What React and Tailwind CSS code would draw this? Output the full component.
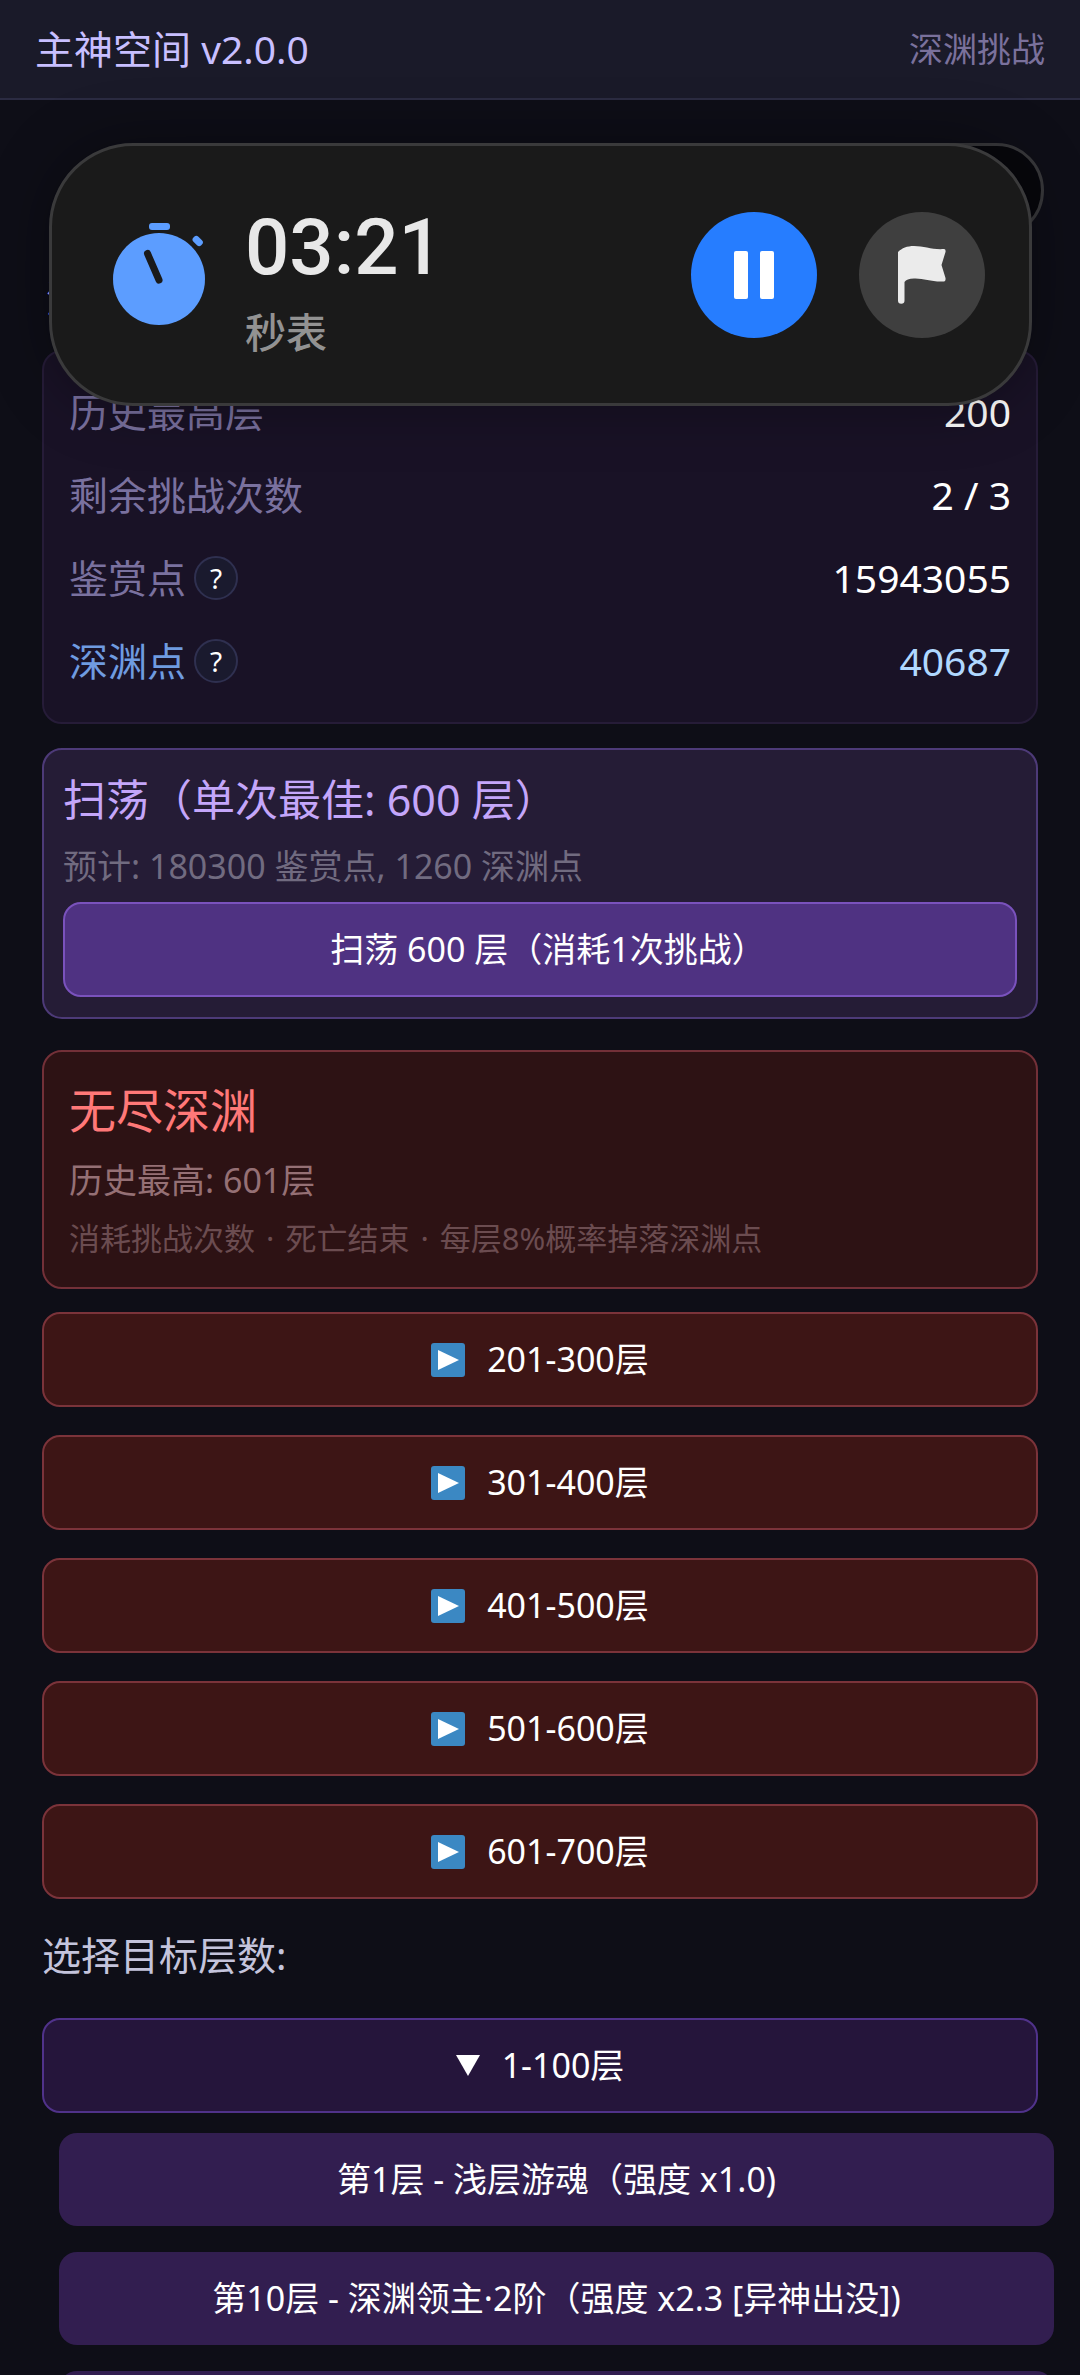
import React, { useState } from "react";

const stats = [
  { label: "历史最高层", value: "200" },
  { label: "剩余挑战次数", value: "2 / 3" },
  { label: "鉴赏点", value: "15943055", help: true },
  { label: "深渊点", value: "40687", help: true, highlight: true },
];

const endlessRanges = ["201-300层", "301-400层", "401-500层", "501-600层", "601-700层"];

const floors = [
  "第1层 - 浅层游魂（强度 x1.0)",
  "第10层 - 深渊领主·2阶（强度 x2.3 [异神出没])",
];

const Header = () => (
  <header className="flex items-center justify-between h-[100px] px-[35px] bg-[#1a1a29] border-b-2 border-[#2b2b42]">
    <h1 className="text-[39px] leading-[56px] text-[#c8bfff]">主神空间 v2.0.0</h1>
    <span className="text-[34px] leading-[56px] text-[#7a719c]">深渊挑战</span>
  </header>
);

const StopwatchIcon = () => (
  <svg className="w-[92px] h-[104px]" viewBox="0 0 92 104">
    <rect x="36" y="0" width="21" height="7" rx="3" fill="#5c9dff" />
    <rect x="79" y="14" width="11" height="7" rx="3" fill="#5c9dff" transform="rotate(45 84 18)" />
    <circle cx="46" cy="56" r="46" fill="#5c9dff" />
    <path d="M34.500 30.500L46 57" stroke="#1a1a1a" strokeWidth="7" strokeLinecap="round" />
  </svg>
);

const StopwatchPopup = ({ running, onToggle }) => (
  <>
    <div className="absolute top-[143px] right-9 w-[300px] h-[95px] rounded-full bg-[#07070c] border-3 border-[#38383b]" />
    <div className="absolute top-[143px] left-[49px] right-12 flex items-center h-[263px] pl-[61px] pr-11 rounded-[84px] bg-[#1a1a1a] border-3 border-[#3a3a3b] shadow-[0_0_60px_rgba(0,0,0,0.35)]">
      <StopwatchIcon />
      <div className="flex-1 pl-10 pt-[30px]">
        <div className="font-['Roboto'] font-medium text-[78px] leading-[84px] text-[#e8e8e8]">03:21</div>
        <div className="text-[41px] leading-[84px] font-medium text-[#929292]">秒表</div>
      </div>
      <div className="flex gap-[42px]">
        <button
          aria-label="暂停"
          aria-pressed={!running}
          onClick={onToggle}
          className="flex items-center justify-center size-[126px] rounded-full bg-[#267dff]"
        >
          <svg className="w-10 h-12" viewBox="0 0 40 48" fill="#ffffff">
            <rect x="0" y="0" width="14" height="48" rx="2" />
            <rect x="26" y="0" width="14" height="48" rx="2" />
          </svg>
        </button>
        <button aria-label="计次" className="flex items-center justify-center size-[126px] rounded-full bg-[#3f3f3f]">
          <svg className="w-12 h-[58px]" viewBox="0 0 48 58" fill="#ebebeb">
            <path d="M0 6C4 2 9 0 16 0C26 0 35 4 46 3Q48 3 47.500 6L43.500 19L47.500 32Q48 35.500 45 35.500C33 36 25 32 16 32.500C11 32.500 8 34 6.500 36V54.500A3.200 3.200 0 0 1 0 54.500Z" />
          </svg>
        </button>
      </div>
    </div>
  </>
);

const StatRow = ({ label, value, help, highlight }) => (
  <div className="flex items-center justify-between h-[83px]">
    <div className="flex items-center gap-2">
      <span className={highlight ? "text-[39px] leading-[56px] text-[#6f9be0]" : "text-[39px] leading-[56px] text-[#7a719f]"}>
        {label}
      </span>
      {help && (
        <button
          aria-label={`${label}说明`}
          className="flex items-center justify-center size-11 rounded-full bg-[#1a1a2e] border-2 border-[#2f3050] text-[28px] leading-none text-white"
        >
          ?
        </button>
      )}
    </div>
    <span className={highlight ? "text-[39px] leading-[56px] text-[#b0d8ff]" : "text-[39px] leading-[56px] text-white"}>
      {value}
    </span>
  </div>
);

const PlayIcon = () => (
  <svg className="size-[34px]" viewBox="0 0 34 34">
    <rect width="34" height="34" rx="3" fill="#3b88c3" />
    <path d="M7 7L28 17L7 27Z" fill="#ffffff" />
  </svg>
);

const Dot = () => <span className="mx-[3px]">·</span>;

const App = () => {
  const [running, setRunning] = useState(true);
  const [open, setOpen] = useState(true);

  return (
    <div className="relative h-screen overflow-hidden bg-[#0e0e17] font-['Noto_Sans','Noto_Sans_CJK_SC',sans-serif]">
      <Header />

      <main className="px-[42px] pt-[152px]">
        <h2 className="h-[98px] pl-1 text-[39px] leading-[92px] text-[#c4a6ff]">深渊挑战</h2>

        <section className="pt-[18px] pb-5 px-[25px] rounded-[20px] bg-[#191226] border-2 border-[#261c38]">
          {stats.map((s) => (
            <StatRow key={s.label} {...s} />
          ))}
        </section>

        <section className="mt-6 py-5 px-[19px] rounded-[20px] bg-[#251c36] border-2 border-[#4d3a78]">
          <h3 className="text-[43px] leading-[60px] text-[#c4a6fa]">扫荡（单次最佳: 600 层）</h3>
          <p className="mt-2 text-[34px] leading-[56px] text-[#716b80]">预计: 180300 鉴赏点, 1260 深渊点</p>
          <button className="block w-full h-[95px] mt-2 pl-4 rounded-[18px] bg-[#4f3282] border-2 border-[#7a52bd] text-[34px] text-white">
            扫荡 600 层（消耗1次挑战）
          </button>
        </section>

        <section className="mt-[31px] pt-[26px] pb-[21px] px-[25px] rounded-[20px] bg-[#2d1214] border-2 border-[#733038]">
          <h3 className="text-[47px] leading-[64px] text-[#ff7878]">无尽深渊</h3>
          <p className="mt-[10px] text-[34px] leading-[56px] text-[#957075]">历史最高: 601层</p>
          <p className="mt-[2px] text-[31px] leading-[56px] text-[#6b4c50]">
            消耗挑战次数 <Dot /> 死亡结束 <Dot /> 每层8%概率掉落深渊点
          </p>
        </section>

        <div className="flex flex-col gap-7 mt-[23px]">
          {endlessRanges.map((range) => (
            <button
              key={range}
              className="flex items-center justify-center gap-[22px] w-full h-[95px] rounded-[18px] bg-[#3d1515] border-2 border-[#7b333a] text-[34px] text-white"
            >
              <PlayIcon />
              {range}
            </button>
          ))}
        </div>

        <p className="mt-[26px] text-[39px] leading-[60px] text-[#c4c4dc]">选择目标层数:</p>

        <button
          aria-expanded={open}
          onClick={() => setOpen(!open)}
          className="flex items-center justify-center gap-[22px] w-full h-[95px] mt-[33px] rounded-[18px] bg-[#25153b] border-2 border-[#50328a] text-[34px] text-white"
        >
          <svg className="w-6 h-[21px]" viewBox="0 0 24 21" fill="#ffffff">
            <path d="M0 0H24L12 21Z" />
          </svg>
          1-100层
        </button>

        {open && (
          <div className="flex flex-col gap-[26px] mt-5 ml-[17px] -mr-4">
            {floors.map((floor) => (
              <button key={floor} className="w-full h-[93px] rounded-[18px] bg-[#321e50] text-[34px] text-white">
                {floor}
              </button>
            ))}
            <div className="h-[93px] rounded-[18px] bg-[#321e50]" />
          </div>
        )}
      </main>

      <StopwatchPopup running={running} onToggle={() => setRunning(!running)} />
    </div>
  );
};

export default App;
